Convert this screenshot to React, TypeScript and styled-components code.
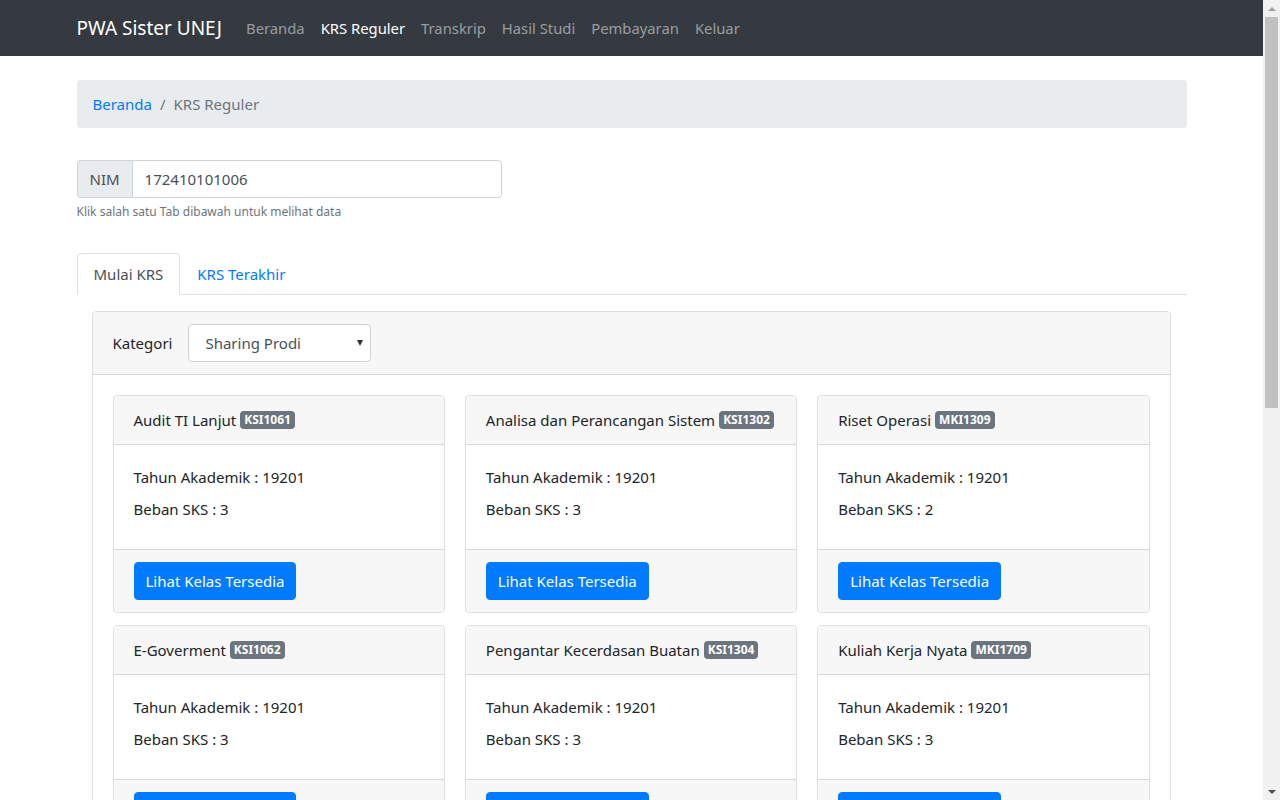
import React from "react";
import styled, { createGlobalStyle } from "styled-components";

const GlobalStyle = createGlobalStyle`
  *, *::before, *::after { box-sizing: border-box; }
  html, body { margin: 0; padding: 0; }
  body {
    font-family: "Noto Sans", "Open Sans", sans-serif;
    font-size: 15px;
    line-height: 24px;
    color: #212529;
    background: #fff;
  }
`;

const Page = styled.div`
  margin-right: 17px;
`;

const ScrollTrack = styled.div`
  position: fixed;
  top: 0;
  right: 0;
  width: 17px;
  height: 100vh;
  background: #f1f1f1;
  display: flex;
  flex-direction: column;
`;

const ScrollArrow = styled.div<{ $down?: boolean }>`
  height: 17px;
  display: flex;
  align-items: center;
  justify-content: center;
  &::after {
    content: "";
    width: 0;
    height: 0;
    border-left: 4px solid transparent;
    border-right: 4px solid transparent;
    ${(p) => (p.$down ? "border-top: 4px solid #505050;" : "border-bottom: 4px solid #a3a3a3;")}
  }
`;

const ScrollThumb = styled.div`
  margin: 0 2px;
  height: 391px;
  background: #c1c1c1;
`;

const ScrollSpacer = styled.div`
  flex: 1;
`;

const Navbar = styled.nav`
  background: #343a40;
  height: 56px;
  display: flex;
  align-items: center;
`;

const Container = styled.div`
  width: 100%;
  max-width: 1140px;
  margin: 0 auto;
  padding: 0 15px;
`;

const NavInner = styled(Container)`
  display: flex;
  align-items: center;
`;

const Brand = styled.a`
  color: #fff;
  font-size: 19px;
  line-height: 30px;
  margin-right: 16px;
  text-decoration: none;
`;

const NavLinks = styled.div`
  display: flex;
`;

const NavLink = styled.a<{ $active?: boolean }>`
  color: ${(p) => (p.$active ? "#fff" : "rgba(255,255,255,0.5)")};
  padding: 8px;
  text-decoration: none;
  font-size: 14.8px;
  line-height: 24px;
`;

const Main = styled(Container)`
  padding-top: 24px;
  padding-bottom: 40px;
`;

const Breadcrumb = styled.ol`
  list-style: none;
  margin: 0 0 32px;
  padding: 12px 16px;
  background: #e9ecef;
  border-radius: 4px;
  display: flex;
  height: 48px;
  align-items: center;
`;

const Crumb = styled.li<{ $active?: boolean }>`
  color: ${(p) => (p.$active ? "#6c757d" : "#007bff")};
`;

const CrumbSep = styled.span`
  color: #6c757d;
  padding: 0 8px;
`;

const InputGroup = styled.div`
  display: flex;
  width: 425px;
  height: 38px;
`;

const InputPrepend = styled.span`
  display: flex;
  align-items: center;
  padding: 0 12px;
  background: #e9ecef;
  border: 1px solid #ced4da;
  border-right: none;
  border-radius: 4px 0 0 4px;
  color: #495057;
`;

const Input = styled.div`
  flex: 1;
  display: flex;
  align-items: center;
  padding: 0 12px;
  border: 1px solid #ced4da;
  border-radius: 0 4px 4px 0;
  color: #495057;
`;

const HelpText = styled.small`
  display: block;
  margin-top: 4px;
  font-size: 12px;
  line-height: 20px;
  color: #6c757d;
`;

const Tabs = styled.div`
  display: flex;
  margin-top: 31px;
  border-bottom: 1px solid #dee2e6;
`;

const Tab = styled.a<{ $active?: boolean }>`
  display: block;
  padding: 8px 16px;
  margin-bottom: -1px;
  border: 1px solid transparent;
  border-color: ${(p) => (p.$active ? "#dee2e6 #dee2e6 #fff" : "transparent")};
  border-radius: 4px 4px 0 0;
  background: ${(p) => (p.$active ? "#fff" : "transparent")};
  color: ${(p) => (p.$active ? "#495057" : "#007bff")};
  text-decoration: none;
  line-height: 24px;
`;

const Panel = styled.div`
  margin: 16px 16px 0 15px;
  border: 1px solid rgba(0, 0, 0, 0.125);
  border-radius: 4px;
`;

const PanelHeader = styled.div`
  display: flex;
  align-items: center;
  padding: 12px 20px;
  background: #f7f7f7;
  border-bottom: 1px solid rgba(0, 0, 0, 0.125);
  border-radius: 3px 3px 0 0;
`;

const Label = styled.span`
  margin-right: 16px;
`;

const Select = styled.div`
  position: relative;
  width: 183px;
  height: 38px;
  padding: 0 16px;
  display: flex;
  align-items: center;
  background: #fff;
  border: 1px solid #ced4da;
  border-radius: 4px;
  color: #495057;
`;

const Caret = styled.span`
  position: absolute;
  right: 7px;
  top: 15px;
  width: 0;
  height: 0;
  border-left: 3.5px solid transparent;
  border-right: 3.5px solid transparent;
  border-top: 6px solid #333;
`;

const PanelBody = styled.div`
  padding: 20px;
  display: grid;
  grid-template-columns: repeat(3, 1fr);
  column-gap: 20px;
  row-gap: 12px;
`;

const Card = styled.div`
  border: 1px solid rgba(0, 0, 0, 0.125);
  border-radius: 4px;
  overflow: hidden;
`;

const CardHeader = styled.div`
  padding: 12px 20px;
  background: #f7f7f7;
  border-bottom: 1px solid rgba(0, 0, 0, 0.125);
  display: flex;
  align-items: center;
`;

const Badge = styled.span`
  display: inline-block;
  margin-left: 4px;
  padding: 2px 4px;
  background: #6c757d;
  color: #fff;
  border-radius: 4px;
  font-size: 12px;
  line-height: 14px;
  font-weight: 700;
`;

const CardBody = styled.div`
  padding: 20px;
`;

const Para = styled.p`
  margin: 0 0 8px;
`;

const CardFooter = styled.div`
  padding: 12px 20px;
  background: #f7f7f7;
  border-top: 1px solid rgba(0, 0, 0, 0.125);
`;

const Button = styled.button`
  font-family: inherit;
  font-size: 15px;
  line-height: 24px;
  padding: 6px 11px;
  border: 1px solid #007bff;
  background: #007bff;
  color: #fff;
  border-radius: 4px;
  cursor: pointer;
`;

const courses = [
  { name: "Audit TI Lanjut", code: "KSI1061", sks: 3 },
  { name: "Analisa dan Perancangan Sistem", code: "KSI1302", sks: 3 },
  { name: "Riset Operasi", code: "MKI1309", sks: 2 },
  { name: "E-Goverment", code: "KSI1062", sks: 3 },
  { name: "Pengantar Kecerdasan Buatan", code: "KSI1304", sks: 3 },
  { name: "Kuliah Kerja Nyata", code: "MKI1709", sks: 3 },
];

export default function App() {
  return (
    <>
      <GlobalStyle />
      <Page>
        <Navbar>
          <NavInner>
            <Brand href="#">PWA Sister UNEJ</Brand>
            <NavLinks>
              <NavLink href="#">Beranda</NavLink>
              <NavLink href="#" $active>KRS Reguler</NavLink>
              <NavLink href="#">Transkrip</NavLink>
              <NavLink href="#">Hasil Studi</NavLink>
              <NavLink href="#">Pembayaran</NavLink>
              <NavLink href="#">Keluar</NavLink>
            </NavLinks>
          </NavInner>
        </Navbar>
        <Main>
          <Breadcrumb>
            <Crumb>Beranda</Crumb>
            <CrumbSep>/</CrumbSep>
            <Crumb $active>KRS Reguler</Crumb>
          </Breadcrumb>
          <InputGroup>
            <InputPrepend>NIM</InputPrepend>
            <Input>172410101006</Input>
          </InputGroup>
          <HelpText>Klik salah satu Tab dibawah untuk melihat data</HelpText>
          <Tabs>
            <Tab href="#" $active>Mulai KRS</Tab>
            <Tab href="#">KRS Terakhir</Tab>
          </Tabs>
          <Panel>
            <PanelHeader>
              <Label>Kategori</Label>
              <Select>
                Sharing Prodi
                <Caret />
              </Select>
            </PanelHeader>
            <PanelBody>
              {courses.map((c) => (
                <Card key={c.code}>
                  <CardHeader>
                    {c.name}
                    <Badge>{c.code}</Badge>
                  </CardHeader>
                  <CardBody>
                    <Para>Tahun Akademik : 19201</Para>
                    <Para>Beban SKS : {c.sks}</Para>
                  </CardBody>
                  <CardFooter>
                    <Button>Lihat Kelas Tersedia</Button>
                  </CardFooter>
                </Card>
              ))}
            </PanelBody>
          </Panel>
        </Main>
      </Page>
      <ScrollTrack aria-hidden>
        <ScrollArrow />
        <ScrollThumb />
        <ScrollSpacer />
        <ScrollArrow $down />
      </ScrollTrack>
    </>
  );
}
